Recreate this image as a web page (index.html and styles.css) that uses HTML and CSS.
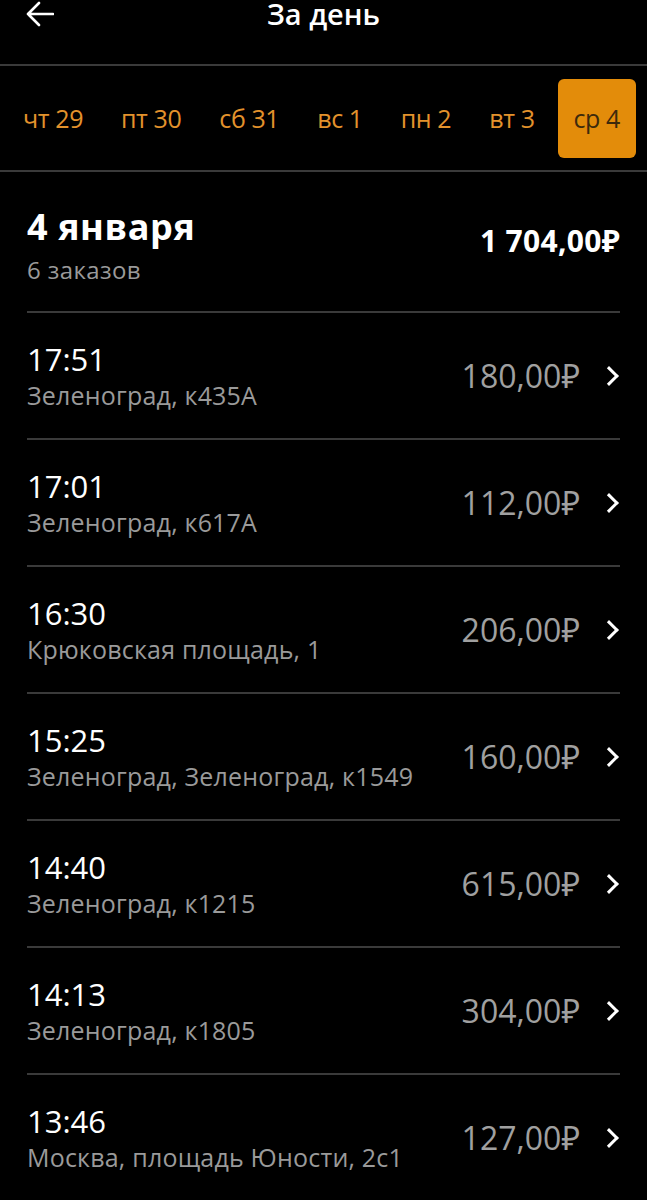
FILE: index.html
```html
<!DOCTYPE html>
<html lang="ru">
<head>
    <meta charset="UTF-8">
    <meta name="viewport" content="width=device-width, initial-scale=1.0">
    <title>За день</title>
    <link rel="stylesheet" href="styles.css">
</head>
<body>

    <div class="header">
        <button class="back" aria-label="Назад">
            <svg width="28" height="26" viewBox="0 0 28 26">
                <path d="M13 2 L2 13 L13 24 M2 13 H27" fill="none" stroke="#fff" stroke-width="2.6" stroke-linecap="round" stroke-linejoin="round"/>
            </svg>
        </button>
        <h1 class="title">За день</h1>
    </div>

    <div class="days">
        <div class="day">чт 29</div>
        <div class="day">пт 30</div>
        <div class="day">сб 31</div>
        <div class="day">вс 1</div>
        <div class="day">пн 2</div>
        <div class="day">вт 3</div>
        <div class="day active">ср 4</div>
    </div>

    <div class="content">
        <div class="summary">
            <div class="summary-info">
                <div class="summary-date">4 января</div>
                <div class="summary-count">6 заказов</div>
            </div>
            <div class="summary-total">1 704,00₽</div>
        </div>

        <div class="orders">
            <div class="order">
                <div class="order-info">
                    <div class="order-time">17:51</div>
                    <div class="order-address">Зеленоград, к435А</div>
                </div>
                <div class="order-price">180,00₽</div>
                <span class="chevron"></span>
            </div>
            <div class="order">
                <div class="order-info">
                    <div class="order-time">17:01</div>
                    <div class="order-address">Зеленоград, к617А</div>
                </div>
                <div class="order-price">112,00₽</div>
                <span class="chevron"></span>
            </div>
            <div class="order">
                <div class="order-info">
                    <div class="order-time">16:30</div>
                    <div class="order-address">Крюковская площадь, 1</div>
                </div>
                <div class="order-price">206,00₽</div>
                <span class="chevron"></span>
            </div>
            <div class="order">
                <div class="order-info">
                    <div class="order-time">15:25</div>
                    <div class="order-address">Зеленоград, Зеленоград, к1549</div>
                </div>
                <div class="order-price">160,00₽</div>
                <span class="chevron"></span>
            </div>
            <div class="order">
                <div class="order-info">
                    <div class="order-time">14:40</div>
                    <div class="order-address">Зеленоград, к1215</div>
                </div>
                <div class="order-price">615,00₽</div>
                <span class="chevron"></span>
            </div>
            <div class="order">
                <div class="order-info">
                    <div class="order-time">14:13</div>
                    <div class="order-address">Зеленоград, к1805</div>
                </div>
                <div class="order-price">304,00₽</div>
                <span class="chevron"></span>
            </div>
            <div class="order">
                <div class="order-info">
                    <div class="order-time">13:46</div>
                    <div class="order-address">Москва, площадь Юности, 2с1</div>
                </div>
                <div class="order-price">127,00₽</div>
                <span class="chevron"></span>
            </div>
        </div>
    </div>

</body>
</html>
```

FILE: styles.css
```css
body {
    margin: 0;
    background-color: #000;
    color: #fff;
    font-family: "Open Sans", "Noto Sans", sans-serif;
}
.header {
    position: relative;
    height: 64px;
    border-bottom: 2px solid #3a3a3a;
    display: flex;
    justify-content: center;
}
.back {
    position: absolute;
    left: 26px;
    top: 1px;
    padding: 0;
    border: none;
    background: none;
}
.title {
    margin: 0;
    font-size: 29px;
    font-weight: 600;
    line-height: 34px;
    margin-top: -3px;
}
.days {
    display: flex;
    justify-content: space-between;
    align-items: center;
    height: 104px;
    padding: 0 11px 0 8px;
    border-bottom: 2px solid #3a3a3a;
}
.day {
    display: flex;
    align-items: center;
    height: 79px;
    padding: 0 15px;
    border-radius: 6px;
    font-size: 25px;
    color: #e3922c;
    letter-spacing: -0.4px;
}
.day.active {
    background-color: #e38c0a;
    color: #3d2a0c;
    padding: 0 16px;
}
.content {
    padding: 0 27px;
}
.summary {
    display: flex;
    justify-content: space-between;
    align-items: center;
    height: 139px;
    border-bottom: 2px solid #3a3a3a;
}
.summary-info {
    padding-top: 6px;
}
.summary-date {
    font-size: 36px;
    font-weight: 700;
    line-height: 44px;
    letter-spacing: 0.6px;
}
.summary-count {
    margin-top: 6px;
    font-size: 24px;
    color: #9a9a9a;
    line-height: 30px;
    letter-spacing: 0.4px;
}
.summary-total {
    font-size: 30px;
    font-weight: 700;
    letter-spacing: 0.3px;
    padding-bottom: 2px;
}
.order {
    display: flex;
    align-items: center;
    height: 125px;
    border-bottom: 2px solid #3a3a3a;
}
.order-info {
    flex: 1;
}
.order-time {
    font-size: 31px;
    line-height: 36px;
}
.order-address {
    margin-top: 2px;
    font-size: 25px;
    color: #9a9a9a;
    line-height: 32px;
    letter-spacing: 0.2px;
}
.order-price {
    font-size: 32px;
    color: #a0a0a0;
}
.chevron {
    width: 11px;
    height: 11px;
    margin: 0 4px 0 22px;
    border-top: 3px solid #fff;
    border-right: 3px solid #fff;
    transform: rotate(45deg);
}
```
